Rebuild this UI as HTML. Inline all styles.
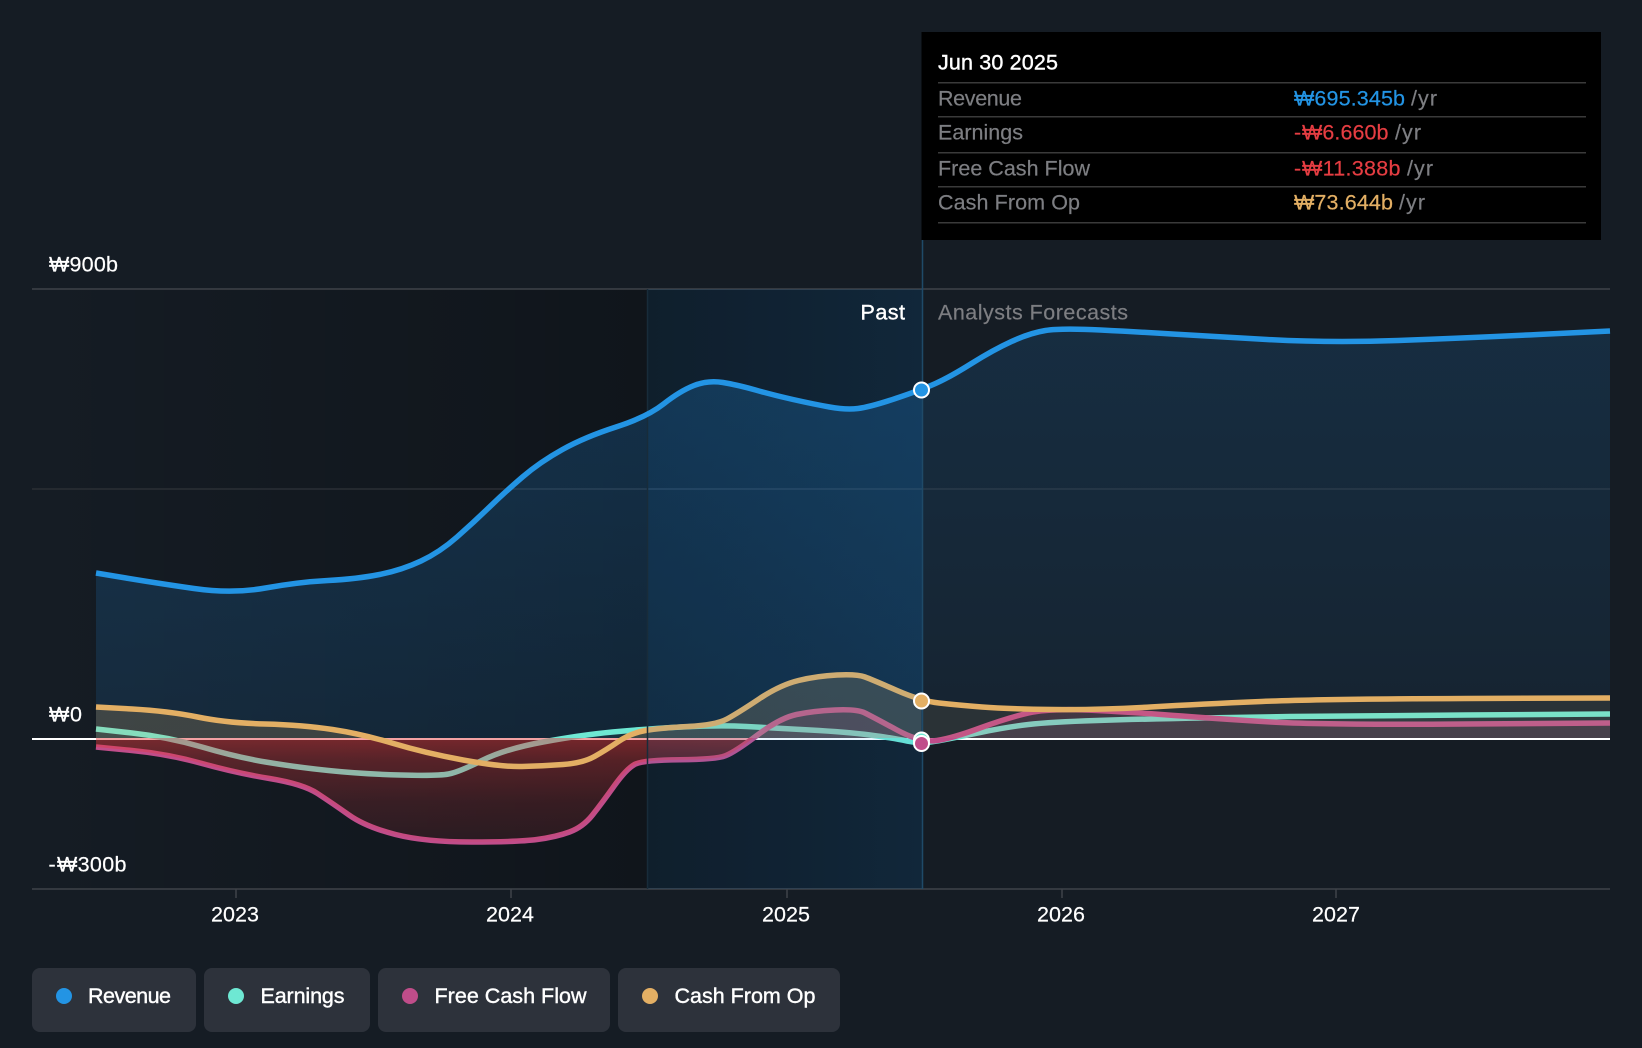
<!DOCTYPE html>
<html lang="en">
<head>
<meta charset="utf-8">
<title>Revenue and Earnings Chart</title>
<style>
html,body{margin:0;padding:0;background:#151c24;width:1642px;height:1048px;overflow:hidden}
svg{display:block}
text{font-family:"Liberation Sans","Noto Sans CJK KR",sans-serif;font-size:21.5px;fill:#fff;stroke:#fff;stroke-width:.2px}
.m{stroke:#fff;stroke-width:.4px}
.g{fill:#7d7e82;stroke:#7d7e82}
.b{fill:#2394e4;stroke:#2394e4}
.r{fill:#e53d42;stroke:#e53d42}
.o{fill:#e3af64;stroke:#e3af64}
.line{fill:none;stroke-width:5.5;stroke-linejoin:round}
</style>
</head>
<body>
<svg width="1642" height="1048" viewBox="0 0 1642 1048" xmlns="http://www.w3.org/2000/svg">
<defs>
<linearGradient id="dark" x1="0" x2="1" y1="0" y2="0"><stop offset="0" stop-color="#000" stop-opacity="0"/><stop offset="1" stop-color="#000" stop-opacity=".25"/></linearGradient>
<linearGradient id="bandU" x1="0" x2="1" y1="0" y2="0"><stop offset="0" stop-color="#0e1216"/><stop offset="1" stop-color="#101b25"/></linearGradient>
<linearGradient id="revP" gradientUnits="userSpaceOnUse" x1="0" x2="0" y1="340" y2="739"><stop offset="0" stop-color="#2196f3" stop-opacity=".22"/><stop offset="1" stop-color="#2196f3" stop-opacity=".12"/></linearGradient>
<linearGradient id="revF" gradientUnits="userSpaceOnUse" x1="0" x2="0" y1="330" y2="739"><stop offset="0" stop-color="#2196f3" stop-opacity=".14"/><stop offset="1" stop-color="#2196f3" stop-opacity=".06"/></linearGradient>
<linearGradient id="red" gradientUnits="userSpaceOnUse" x1="0" x2="0" y1="738" y2="845"><stop offset="0" stop-color="#e5393c" stop-opacity=".48"/><stop offset=".2" stop-color="#e5393c" stop-opacity=".33"/><stop offset=".6" stop-color="#e5393c" stop-opacity=".18"/><stop offset="1" stop-color="#e5393c" stop-opacity=".11"/></linearGradient>
<linearGradient id="orangeF" gradientUnits="userSpaceOnUse" x1="96" x2="1610" y1="0" y2="0"><stop offset=".5449" stop-color="#e3af64" stop-opacity=".2"/><stop offset=".5449" stop-color="#e3af64" stop-opacity=".1"/></linearGradient>
<clipPath id="past"><rect x="0" y="0" width="923" height="1048"/></clipPath>
<clipPath id="fut"><rect x="923" y="0" width="719" height="1048"/></clipPath>
<clipPath id="pos"><rect x="0" y="0" width="1642" height="738"/></clipPath>
<clipPath id="neg"><rect x="0" y="738" width="1642" height="310"/></clipPath>
</defs>

<rect x="32" y="289" width="615" height="600" fill="url(#dark)"/>
<rect x="647" y="289" width="276" height="600" fill="url(#bandU)"/>

<line x1="32" x2="1610" y1="289" y2="289" stroke="#3f4349" stroke-width="1.5"/>
<line x1="32" x2="1610" y1="489" y2="489" stroke="#2b2f35" stroke-width="1.5"/>
<line x1="32" x2="1610" y1="889" y2="889" stroke="#3f4349" stroke-width="1.5"/>
<g stroke="#3f4349" stroke-width="1.5">
<line x1="236" x2="236" y1="889" y2="898"/>
<line x1="511" x2="511" y1="889" y2="898"/>
<line x1="787" x2="787" y1="889" y2="898"/>
<line x1="1062" x2="1062" y1="889" y2="898"/>
<line x1="1336" x2="1336" y1="889" y2="898"/>
</g>

<!-- revenue fills -->
<path clip-path="url(#past)" fill="url(#revP)" d="M96 573 L126 578 Q156 583 194 588.5 Q232 594 265.5 588 Q299 582 328 580.5 Q357 579 379.5 574.5 Q402 570 421 561 Q440 552 457 537 Q474 522 489.5 507 Q505 492 522.5 477 Q540 462 562.5 449.5 Q585 437 616 427 Q647 417 663.5 404 Q680 391 694 385.5 Q708 380 723 382.5 Q738 385 755.5 390 Q773 395 793 399.5 Q813 404 829.5 407 Q846 410 858 408.5 Q870 407 895.5 398.5 Q921 390 935.5 383.5 Q950 377 971.5 363.5 Q993 350 1011.5 341.5 Q1030 333 1045.5 330.5 Q1061 328 1100.5 330 Q1140 332 1172 334 Q1204 336 1267 339.5 Q1330 343 1398 340.5 Q1466 338 1538 334.5 L1610 331 L1610 738 L96 738 Z"/>
<path clip-path="url(#fut)" fill="url(#revF)" d="M96 573 L126 578 Q156 583 194 588.5 Q232 594 265.5 588 Q299 582 328 580.5 Q357 579 379.5 574.5 Q402 570 421 561 Q440 552 457 537 Q474 522 489.5 507 Q505 492 522.5 477 Q540 462 562.5 449.5 Q585 437 616 427 Q647 417 663.5 404 Q680 391 694 385.5 Q708 380 723 382.5 Q738 385 755.5 390 Q773 395 793 399.5 Q813 404 829.5 407 Q846 410 858 408.5 Q870 407 895.5 398.5 Q921 390 935.5 383.5 Q950 377 971.5 363.5 Q993 350 1011.5 341.5 Q1030 333 1045.5 330.5 Q1061 328 1100.5 330 Q1140 332 1172 334 Q1204 336 1267 339.5 Q1330 343 1398 340.5 Q1466 338 1538 334.5 L1610 331 L1610 738 L96 738 Z"/>

<!-- zero line -->
<line x1="32" x2="1610" y1="739" y2="739" stroke="#fff" stroke-width="2"/>

<!-- teal & pink lines under the fills -->
<path class="line" stroke="#6ee8d3" d="M96 729 L132 733 Q168 737 202 747 Q236 757 265.5 762 Q295 767 328.5 770.5 Q362 774 400 775 Q438 776 448.5 774 Q459 772 482 760.5 Q505 749 543 742 Q581 735 612.5 732 Q644 729 682 727 Q720 725 746.5 726.5 Q773 728 810 730 Q847 732 870 735 Q893 738 907 741 Q921 744 937 741 Q953 738 980 732.5 Q1007 727 1028.5 724.5 Q1050 722 1097 720.5 Q1144 719 1201 718 Q1258 717 1290 716.5 Q1322 716 1466 715 L1610 714"/>
<path class="line" stroke="#c04d8a" d="M96 747 L132 750.5 Q168 754 202 763.5 Q236 773 269.5 778.5 Q303 784 317.5 793.5 Q332 803 349 815 Q366 827 395.5 834.5 Q425 842 471.5 842 Q518 842 537 839.5 Q556 837 569.5 832 Q583 827 592.5 815 Q602 803 614.5 785.5 Q627 768 635.5 764 Q644 760 680 759.7 Q716 759.5 725.5 755.7 Q735 752 757.5 735 Q780 718 796.5 714.5 Q813 711 835 710 Q857 709 865 713 Q873 717 897 730 Q921 743 937 740.5 Q953 738 980 728 Q1007 718 1028.5 713 Q1050 708 1097 710.5 Q1144 713 1182 716 Q1220 719 1271 722 Q1322 725 1466 724 L1610 723"/>

<!-- positive fills -->
<path clip-path="url(#pos)" fill="#6ee8d3" fill-opacity=".07" d="M96 729 L132 733 Q168 737 202 747 Q236 757 265.5 762 Q295 767 328.5 770.5 Q362 774 400 775 Q438 776 448.5 774 Q459 772 482 760.5 Q505 749 543 742 Q581 735 612.5 732 Q644 729 682 727 Q720 725 746.5 726.5 Q773 728 810 730 Q847 732 870 735 Q893 738 907 741 Q921 744 937 741 Q953 738 980 732.5 Q1007 727 1028.5 724.5 Q1050 722 1097 720.5 Q1144 719 1201 718 Q1258 717 1290 716.5 Q1322 716 1466 715 L1610 714 L1610 738 L96 738 Z"/>
<path clip-path="url(#pos)" fill="#c04d8a" fill-opacity=".16" d="M96 747 L132 750.5 Q168 754 202 763.5 Q236 773 269.5 778.5 Q303 784 317.5 793.5 Q332 803 349 815 Q366 827 395.5 834.5 Q425 842 471.5 842 Q518 842 537 839.5 Q556 837 569.5 832 Q583 827 592.5 815 Q602 803 614.5 785.5 Q627 768 635.5 764 Q644 760 680 759.7 Q716 759.5 725.5 755.7 Q735 752 757.5 735 Q780 718 796.5 714.5 Q813 711 835 710 Q857 709 865 713 Q873 717 897 730 Q921 743 937 740.5 Q953 738 980 728 Q1007 718 1028.5 713 Q1050 708 1097 710.5 Q1144 713 1182 716 Q1220 719 1271 722 Q1322 725 1466 724 L1610 723 L1610 738 L96 738 Z"/>
<path clip-path="url(#pos)" fill="url(#orangeF)" d="M96 707 L132 709 Q168 711 197.5 717 Q227 723 265 724 Q303 725 332.5 729.5 Q362 734 393.5 743.5 Q425 753 463 760 Q501 767 522 766.5 Q543 766 563 764.5 Q583 763 594.5 756.5 Q606 750 618.5 741.5 Q631 733 645.5 730.5 Q660 728 688 726.5 Q716 725 727 719 Q738 713 759 699 Q780 685 798.5 680.5 Q817 676 837 675 Q857 674 865 677 Q873 680 897 690.5 Q921 701 939 703 Q957 705 982 707 Q1007 709 1053.5 709.5 Q1100 710 1150.5 707 Q1201 704 1261.5 701.5 Q1322 699 1466 698.5 L1610 698 L1610 738 L96 738 Z"/>

<!-- negative fill -->
<path clip-path="url(#neg)" fill="url(#red)" d="M96 747 L132 750.5 Q168 754 202 763.5 Q236 773 269.5 778.5 Q303 784 317.5 793.5 Q332 803 349 815 Q366 827 395.5 834.5 Q425 842 471.5 842 Q518 842 537 839.5 Q556 837 569.5 832 Q583 827 592.5 815 Q602 803 614.5 785.5 Q627 768 635.5 764 Q644 760 680 759.7 Q716 759.5 725.5 755.7 Q735 752 757.5 735 L757.5 738 L96 738 Z"/>

<!-- orange line -->
<path class="line" stroke="#e3af64" d="M96 707 L132 709 Q168 711 197.5 717 Q227 723 265 724 Q303 725 332.5 729.5 Q362 734 393.5 743.5 Q425 753 463 760 Q501 767 522 766.5 Q543 766 563 764.5 Q583 763 594.5 756.5 Q606 750 618.5 741.5 Q631 733 645.5 730.5 Q660 728 688 726.5 Q716 725 727 719 Q738 713 759 699 Q780 685 798.5 680.5 Q817 676 837 675 Q857 674 865 677 Q873 680 897 690.5 Q921 701 939 703 Q957 705 982 707 Q1007 709 1053.5 709.5 Q1100 710 1150.5 707 Q1201 704 1261.5 701.5 Q1322 699 1466 698.5 L1610 698"/>

<!-- band overlay -->
<rect x="647" y="289" width="276" height="600" fill="#2196f3" fill-opacity=".1"/>
<line x1="647.5" x2="647.5" y1="289" y2="889" stroke="#182c3a" stroke-width="1.5"/>
<line x1="922.5" x2="922.5" y1="240" y2="889" stroke="#1f4a68" stroke-width="1.5"/>

<!-- blue line -->
<path class="line" stroke="#2394e4" d="M96 573 L126 578 Q156 583 194 588.5 Q232 594 265.5 588 Q299 582 328 580.5 Q357 579 379.5 574.5 Q402 570 421 561 Q440 552 457 537 Q474 522 489.5 507 Q505 492 522.5 477 Q540 462 562.5 449.5 Q585 437 616 427 Q647 417 663.5 404 Q680 391 694 385.5 Q708 380 723 382.5 Q738 385 755.5 390 Q773 395 793 399.5 Q813 404 829.5 407 Q846 410 858 408.5 Q870 407 895.5 398.5 Q921 390 935.5 383.5 Q950 377 971.5 363.5 Q993 350 1011.5 341.5 Q1030 333 1045.5 330.5 Q1061 328 1100.5 330 Q1140 332 1172 334 Q1204 336 1267 339.5 Q1330 343 1398 340.5 Q1466 338 1538 334.5 L1610 331"/>

<!-- markers -->
<g stroke="#fff" stroke-width="2">
<circle cx="921.5" cy="390" r="7.5" fill="#2394e4"/>
<circle cx="921.5" cy="740" r="7.5" fill="#6ee8d3"/>
<circle cx="921.5" cy="701" r="7.5" fill="#e3af64"/>
<circle cx="921.5" cy="743.5" r="7.5" fill="#c04d8a"/>
</g>

<!-- axis labels -->
<text x="49" y="271.5" textLength="69" lengthAdjust="spacing">₩900b</text>
<text x="49" y="721.5" textLength="33" lengthAdjust="spacing">₩0</text>
<text x="48.5" y="871.5">-</text>
<text x="57" y="871.5" textLength="69.5" lengthAdjust="spacing">₩300b</text>
<text x="211" y="921.5" textLength="48">2023</text>
<text x="486" y="921.5" textLength="48">2024</text>
<text x="762" y="921.5" textLength="48">2025</text>
<text x="1037" y="921.5" textLength="48">2026</text>
<text x="1312" y="921.5" textLength="48">2027</text>
<text class="m" x="860.5" y="319.5" textLength="44.5">Past</text>
<text class="g" x="938" y="319.5" textLength="190">Analysts Forecasts</text>

<!-- tooltip -->
<rect x="921.5" y="32" width="679.5" height="208" fill="#000"/>
<g stroke="#3a3a3a" stroke-width="1.5">
<line x1="938" x2="1586" y1="82.7" y2="82.7"/>
<line x1="938" x2="1586" y1="116.7" y2="116.7"/>
<line x1="938" x2="1586" y1="152.7" y2="152.7"/>
<line x1="938" x2="1586" y1="186.7" y2="186.7"/>
<line x1="938" x2="1586" y1="222.7" y2="222.7"/>
</g>
<text class="m" x="938" y="69.5" textLength="120">Jun 30 2025</text>
<text class="g" x="938" y="105.5" textLength="84">Revenue</text>
<text class="g" x="938" y="139.5" textLength="85">Earnings</text>
<text class="g" x="938" y="175.5" textLength="152">Free Cash Flow</text>
<text class="g" x="938" y="209.5" textLength="142">Cash From Op</text>
<text class="b" x="1294" y="105.5" textLength="111">₩695.345b</text>
<text class="g" x="1411" y="105.5" textLength="26">/yr</text>
<text class="r" x="1294" y="139.5">-</text>
<text class="r" x="1302" y="139.5" textLength="86.5">₩6.660b</text>
<text class="g" x="1395" y="139.5" textLength="26">/yr</text>
<text class="r" x="1294" y="175.5">-</text>
<text class="r" x="1302" y="175.5" textLength="98.5">₩11.388b</text>
<text class="g" x="1407" y="175.5" textLength="26">/yr</text>
<text class="o" x="1294" y="209.5" textLength="99">₩73.644b</text>
<text class="g" x="1399" y="209.5" textLength="26">/yr</text>

<!-- legend -->
<rect x="32" y="968" width="164" height="64" rx="8" fill="#2d323b"/>
<rect x="204" y="968" width="166" height="64" rx="8" fill="#2d323b"/>
<rect x="378" y="968" width="232" height="64" rx="8" fill="#2d323b"/>
<rect x="618" y="968" width="222" height="64" rx="8" fill="#2d323b"/>
<circle cx="64" cy="996" r="8" fill="#2394e4"/>
<circle cx="236" cy="996" r="8" fill="#6ee8d3"/>
<circle cx="410" cy="996" r="8" fill="#c04d8a"/>
<circle cx="650" cy="996" r="8" fill="#e3af64"/>
<text class="m" x="88" y="1003" textLength="83">Revenue</text>
<text class="m" x="260.5" y="1003" textLength="84">Earnings</text>
<text class="m" x="434.5" y="1003" textLength="152">Free Cash Flow</text>
<text class="m" x="674.5" y="1003" textLength="141">Cash From Op</text>
</svg>
</body>
</html>
